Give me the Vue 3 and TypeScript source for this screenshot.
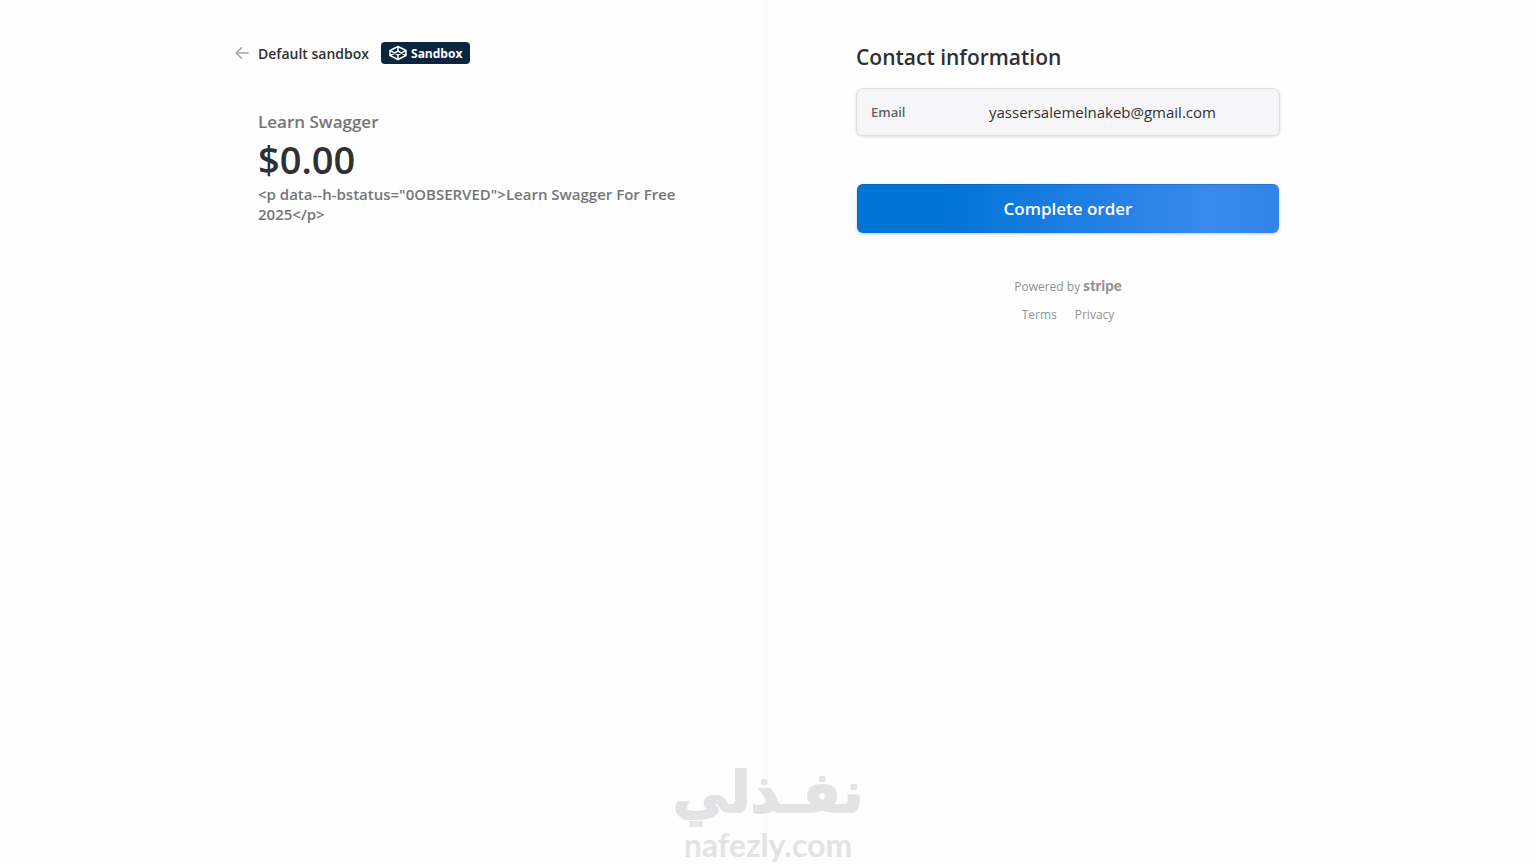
<script setup lang="ts">
import { ref } from 'vue'

const merchant = 'Default sandbox'
const product = {
  name: 'Learn Swagger',
  price: '$0.00',
  description: '<p data--h-bstatus="0OBSERVED">Learn Swagger For Free 2025</p>',
}
const email = ref('yassersalemelnakeb@gmail.com')
const legalLinks: string[] = ['Terms', 'Privacy']
</script>

<template>
  <div class="checkout">
    <section class="pane summary">
      <div class="column">
        <header class="merchant">
          <a class="back" href="#" aria-label="Back">
            <svg viewBox="0 0 14 14" width="14" height="14" aria-hidden="true">
              <path d="M13 7H1.5M6.5 1.7 1.2 7l5.3 5.3" />
            </svg>
          </a>
          <span class="merchant-name">{{ merchant }}</span>
          <span class="badge">
            <svg viewBox="0 0 18 16" width="18" height="16" aria-hidden="true">
              <path d="M9 1.500 17 5.500v5L9 14.500 1 10.500v-5zM1 5.500 9 9.800l8-4.300M1 10.500 9 6.200l8 4.300M9 1.500v4.700M9 9.800v4.700" />
            </svg>
            Sandbox
          </span>
        </header>
        <h1 class="product">{{ product.name }}</h1>
        <p class="price">{{ product.price }}</p>
        <p class="description">{{ product.description }}</p>
      </div>
    </section>

    <main class="pane payment">
      <form class="column" @submit.prevent>
        <h2 class="title">Contact information</h2>
        <div class="field">
          <label for="email">Email</label>
          <input id="email" v-model="email" type="email" readonly />
        </div>
        <button class="submit" type="submit">Complete order</button>
        <footer class="footer">
          <a class="powered" href="#">Powered by <b>stripe</b></a>
          <nav class="legal">
            <a v-for="link in legalLinks" :key="link" href="#">{{ link }}</a>
          </nav>
        </footer>
      </form>
    </main>

    <div class="watermark">
      <span class="mark-ar" lang="ar" dir="rtl">نفـذلي</span>
      <span class="mark-en">nafezly.com</span>
    </div>
  </div>
</template>

<style>
body {
  margin: 0;
  background: #fefefe;
}
</style>

<style scoped>
.checkout {
  position: relative;
  display: grid;
  grid-template-columns: 1fr 1fr;
  min-height: 100vh;
  overflow: hidden;
  font-family: "Segoe UI", "Open Sans", "Noto Sans", sans-serif;
  color: #303032;
}

.pane {
  box-sizing: border-box;
  display: flex;
  padding: 42px 88px 0;
}

.summary {
  justify-content: flex-end;
  padding-right: 80px;
}

.payment {
  box-shadow: 0 0 14px rgba(20, 20, 60, 0.03);
}

.column {
  width: 100%;
  max-width: 424px;
}

.summary .column {
  max-width: 430px;
}

.merchant {
  display: flex;
  align-items: center;
  height: 22px;
  margin-left: -23px;
  font-size: 14px;
  font-weight: 600;
}

.back {
  display: flex;
  margin-right: 9px;
}

svg {
  fill: none;
  stroke-linecap: round;
  stroke-linejoin: round;
}

.back svg {
  stroke: #a5a5a7;
  stroke-width: 1.5;
}

.badge {
  display: flex;
  align-items: center;
  gap: 4px;
  height: 22px;
  margin-left: 12px;
  padding: 0 8px;
  border-radius: 4px;
  background: #0a2540;
  color: #fff;
  font-size: 12px;
  font-weight: 700;
}

.badge svg {
  stroke: #fff;
  stroke-width: 1.5;
}

.product {
  margin: 46px 0 0;
  color: #757577;
  font-size: 17px;
  font-weight: 600;
  line-height: 24px;
}

.price {
  margin: 2px 0 0;
  font-size: 38px;
  font-weight: 600;
  line-height: 46px;
}

.description {
  margin: 2px 0 0;
  color: #757577;
  font-size: 15px;
  font-weight: 600;
  line-height: 20px;
}

.title {
  margin: 0;
  font-size: 21px;
  font-weight: 600;
  line-height: 30px;
}

.field {
  box-sizing: border-box;
  display: flex;
  align-items: center;
  height: 48px;
  margin-top: 16px;
  padding: 0 14px;
  border: 1px solid #dfdfe3;
  border-radius: 7px;
  background: #f6f6f8;
  box-shadow: 0 1px 3px rgba(0, 0, 0, 0.12);
}

.field label {
  width: 118px;
  color: #626264;
  font-size: 13px;
  font-weight: 600;
}

.field input {
  flex: 1;
  min-width: 0;
  padding: 0;
  border: 0;
  outline: 0;
  background: transparent;
  color: #303032;
  font: inherit;
  font-size: 15px;
}

.submit {
  display: block;
  width: calc(100% - 2px);
  height: 49px;
  margin: 48px 1px 0;
  padding: 0;
  border: 0;
  border-radius: 6px;
  background: linear-gradient(90deg, #0074d6 0%, #0074d6 20%, #3a89ee 84%, #3283e8 100%);
  box-shadow: inset 0 1px 0 rgba(0, 50, 110, 0.25), 0 1px 3px rgba(0, 40, 100, 0.25);
  color: #fff;
  font: inherit;
  font-size: 17px;
  font-weight: 600;
}

.footer {
  display: flex;
  flex-direction: column;
  align-items: center;
  margin-top: 44px;
  font-size: 12px;
  line-height: 20px;
}

.footer a {
  color: #929294;
  text-decoration: none;
}

.powered b {
  font-family: Lato, sans-serif;
  font-size: 15px;
  font-weight: 900;
  line-height: 16px;
}

.legal {
  display: flex;
  gap: 18px;
  margin-top: 8px;
}

.watermark {
  position: absolute;
  bottom: 0;
  left: 50%;
  display: flex;
  flex-direction: column;
  align-items: center;
  color: #e3e3e5;
  transform: translateX(-50%);
}

.mark-ar {
  font-family: "DejaVu Sans", sans-serif;
  font-size: 56px;
  font-weight: 700;
  line-height: 66px;
  -webkit-text-stroke: 2px #e3e3e5;
}

.mark-en {
  font-family: Lato, sans-serif;
  font-size: 32px;
  font-weight: 700;
  line-height: 38px;
}
</style>
